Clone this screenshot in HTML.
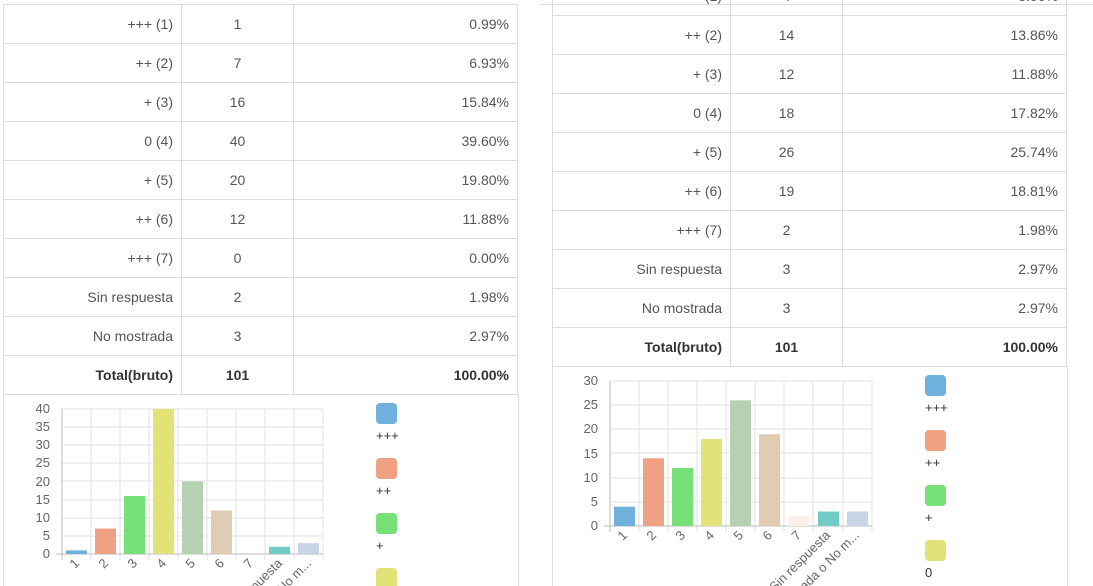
<!DOCTYPE html>
<html><head><meta charset="utf-8"><style>
html,body{margin:0;width:1093px;height:586px;overflow:hidden;background:#fff;font-family:"Liberation Sans",Arial,sans-serif}
#w{position:relative;width:1093px;height:586px;overflow:hidden}
table{position:absolute;border-collapse:collapse;font-size:14px;color:#555;table-layout:fixed}
td{border:1px solid #ddd;height:38px;padding:0 8px;white-space:nowrap}
td.a{text-align:right}td.b{text-align:center}td.c{text-align:right}
tr.t td{font-weight:bold;color:#333}
.box{position:absolute;border-left:1px solid #ddd;border-right:1px solid #ddd}
.lg{position:absolute;font-size:13px;color:#333;overflow:hidden}
.sq{width:21px;height:21px;border-radius:4px;margin-bottom:4px}
</style></head><body><div id="w">
<table style="left:3px;top:4px;width:515px">
<colgroup><col style="width:178px"><col style="width:112px"><col style="width:224px"></colgroup>
<tr><td class="a">+++ (1)</td><td class="b">1</td><td class="c">0.99%</td></tr>
<tr><td class="a">++ (2)</td><td class="b">7</td><td class="c">6.93%</td></tr>
<tr><td class="a">+ (3)</td><td class="b">16</td><td class="c">15.84%</td></tr>
<tr><td class="a">0 (4)</td><td class="b">40</td><td class="c">39.60%</td></tr>
<tr><td class="a">+ (5)</td><td class="b">20</td><td class="c">19.80%</td></tr>
<tr><td class="a">++ (6)</td><td class="b">12</td><td class="c">11.88%</td></tr>
<tr><td class="a">+++ (7)</td><td class="b">0</td><td class="c">0.00%</td></tr>
<tr><td class="a">Sin respuesta</td><td class="b">2</td><td class="c">1.98%</td></tr>
<tr><td class="a">No mostrada</td><td class="b">3</td><td class="c">2.97%</td></tr>
<tr class="t"><td class="a">Total(bruto)</td><td class="b">101</td><td class="c">100.00%</td></tr>
</table>
<div class="box" style="left:3px;top:394px;width:514px;height:192px"></div>

<table style="left:552px;top:-24px;width:515px">
<colgroup><col style="width:178px"><col style="width:112px"><col style="width:224px"></colgroup>
<tr><td class="a">+++ (1)</td><td class="b">4</td><td class="c">3.96%</td></tr>
<tr><td class="a">++ (2)</td><td class="b">14</td><td class="c">13.86%</td></tr>
<tr><td class="a">+ (3)</td><td class="b">12</td><td class="c">11.88%</td></tr>
<tr><td class="a">0 (4)</td><td class="b">18</td><td class="c">17.82%</td></tr>
<tr><td class="a">+ (5)</td><td class="b">26</td><td class="c">25.74%</td></tr>
<tr><td class="a">++ (6)</td><td class="b">19</td><td class="c">18.81%</td></tr>
<tr><td class="a">+++ (7)</td><td class="b">2</td><td class="c">1.98%</td></tr>
<tr><td class="a">Sin respuesta</td><td class="b">3</td><td class="c">2.97%</td></tr>
<tr><td class="a">No mostrada</td><td class="b">3</td><td class="c">2.97%</td></tr>
<tr class="t"><td class="a">Total(bruto)</td><td class="b">101</td><td class="c">100.00%</td></tr>
</table>
<div class="box" style="left:552px;top:366px;width:514px;height:220px"></div>
<div style="position:absolute;left:540px;top:4px;width:553px;border-top:1px solid #ddd"></div>

<svg width="1093" height="586" style="position:absolute;left:0;top:0" font-family="Liberation Sans,Arial,sans-serif" font-size="13" fill="#666">
<g stroke="#e2e2e2" stroke-width="1">
<line x1="62" y1="409" x2="323" y2="409"/><line x1="62" y1="427" x2="323" y2="427"/><line x1="62" y1="445" x2="323" y2="445"/><line x1="62" y1="463" x2="323" y2="463"/><line x1="62" y1="481" x2="323" y2="481"/><line x1="62" y1="500" x2="323" y2="500"/><line x1="62" y1="518" x2="323" y2="518"/><line x1="62" y1="536" x2="323" y2="536"/>
<line x1="91" y1="409" x2="91" y2="560"/><line x1="120" y1="409" x2="120" y2="560"/><line x1="149" y1="409" x2="149" y2="560"/><line x1="178" y1="409" x2="178" y2="560"/><line x1="207" y1="409" x2="207" y2="560"/><line x1="236" y1="409" x2="236" y2="560"/><line x1="265" y1="409" x2="265" y2="560"/><line x1="294" y1="409" x2="294" y2="560"/><line x1="323" y1="409" x2="323" y2="560"/>
<line x1="610" y1="381" x2="872" y2="381"/><line x1="610" y1="405" x2="872" y2="405"/><line x1="610" y1="429" x2="872" y2="429"/><line x1="610" y1="453" x2="872" y2="453"/><line x1="610" y1="478" x2="872" y2="478"/><line x1="610" y1="502" x2="872" y2="502"/>
<line x1="639" y1="381" x2="639" y2="532"/><line x1="668" y1="381" x2="668" y2="532"/><line x1="697" y1="381" x2="697" y2="532"/><line x1="726" y1="381" x2="726" y2="532"/><line x1="755" y1="381" x2="755" y2="532"/><line x1="784" y1="381" x2="784" y2="532"/><line x1="813" y1="381" x2="813" y2="532"/><line x1="843" y1="381" x2="843" y2="532"/><line x1="872" y1="381" x2="872" y2="532"/>
</g>
<g stroke="#bbb"><line x1="62" y1="409" x2="62" y2="560"/><line x1="56" y1="554" x2="323" y2="554"/><line x1="610" y1="381" x2="610" y2="532"/><line x1="604" y1="526" x2="872" y2="526"/></g>
<g>
<rect x="66" y="550.4" width="21" height="3.6" fill="#6fb1dc"/>
<rect x="95" y="528.6" width="21" height="25.4" fill="#f0a183"/>
<rect x="124" y="496" width="21" height="58" fill="#77e077"/>
<rect x="153" y="409" width="21" height="145" fill="#e2e276"/>
<rect x="182" y="481.5" width="21" height="72.5" fill="#b6d1b2"/>
<rect x="211" y="510.5" width="21" height="43.5" fill="#dfccb2"/>
<rect x="269" y="546.8" width="21" height="7.2" fill="#73cbc6"/>
<rect x="298" y="543.1" width="21" height="10.9" fill="#c9d4e6"/>
<rect x="614" y="506.7" width="21" height="19.3" fill="#6fb1dc"/>
<rect x="643" y="458.3" width="21" height="67.7" fill="#f0a183"/>
<rect x="672" y="468" width="21" height="58" fill="#77e077"/>
<rect x="701" y="439" width="21" height="87" fill="#e2e276"/>
<rect x="730" y="400.3" width="21" height="125.7" fill="#b6d1b2"/>
<rect x="759" y="434.2" width="21" height="91.8" fill="#dfccb2"/>
<rect x="788" y="516.3" width="21" height="9.7" fill="#fcefe9"/>
<rect x="818" y="511.5" width="21" height="14.5" fill="#73cbc6"/>
<rect x="847" y="511.5" width="21" height="14.5" fill="#c9d4e6"/>
</g>
<g text-anchor="end">
<text x="50" y="413">40</text><text x="50" y="431">35</text><text x="50" y="449">30</text><text x="50" y="467">25</text><text x="50" y="486">20</text><text x="50" y="504">15</text><text x="50" y="522">10</text><text x="50" y="540">5</text><text x="50" y="558">0</text>
<text x="598" y="385">30</text><text x="598" y="409">25</text><text x="598" y="433">20</text><text x="598" y="458">15</text><text x="598" y="482">10</text><text x="598" y="506">5</text><text x="598" y="530">0</text>
<text transform="translate(80,564) rotate(-45)">1</text><text transform="translate(109,564) rotate(-45)">2</text><text transform="translate(138,564) rotate(-45)">3</text><text transform="translate(167,564) rotate(-45)">4</text><text transform="translate(196,564) rotate(-45)">5</text><text transform="translate(225,564) rotate(-45)">6</text><text transform="translate(254,564) rotate(-45)">7</text><text transform="translate(283,564) rotate(-45)">Sin respuesta</text><text transform="translate(312,564) rotate(-45)">No m...</text>
<text transform="translate(628,536) rotate(-45)">1</text><text transform="translate(657,536) rotate(-45)">2</text><text transform="translate(686,536) rotate(-45)">3</text><text transform="translate(715,536) rotate(-45)">4</text><text transform="translate(744,536) rotate(-45)">5</text><text transform="translate(773,536) rotate(-45)">6</text><text transform="translate(802,536) rotate(-45)">7</text><text transform="translate(831,536) rotate(-45)">Sin respuesta</text><text transform="translate(860,536) rotate(-45)">Mostrada o No m...</text>
</g>
</svg>

<div class="lg" style="left:376px;top:403px"><div class="sq" style="background:#6fb1dc"></div>+++</div>
<div class="lg" style="left:376px;top:458px"><div class="sq" style="background:#f0a183"></div>++</div>
<div class="lg" style="left:376px;top:513px"><div class="sq" style="background:#77e077"></div>+</div>
<div class="lg" style="left:376px;top:568px;height:18px"><div class="sq" style="background:#e2e276"></div></div>
<div class="lg" style="left:925px;top:375px"><div class="sq" style="background:#6fb1dc"></div>+++</div>
<div class="lg" style="left:925px;top:430px"><div class="sq" style="background:#f0a183"></div>++</div>
<div class="lg" style="left:925px;top:485px"><div class="sq" style="background:#77e077"></div>+</div>
<div class="lg" style="left:925px;top:540px"><div class="sq" style="background:#e2e276"></div>0</div>
</div></body></html>
